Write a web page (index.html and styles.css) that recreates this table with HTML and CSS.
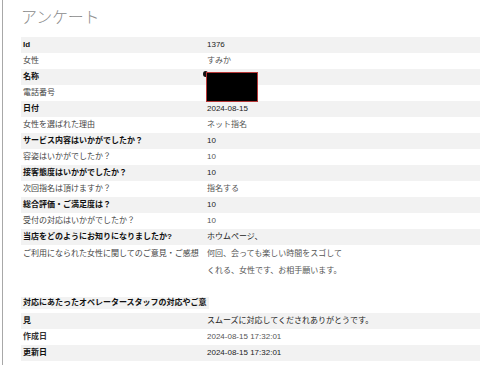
FILE: index.html
```html
<!DOCTYPE html>
<html lang="ja">
<head>
<meta charset="utf-8">
<title>アンケート</title>
<link rel="stylesheet" href="styles.css">
</head>
<body>
<div class="frame">
  <h1 class="title">アンケート</h1>
  <div class="sheet">
    <div class="row alt"><div class="k">Id</div><div class="v">1376</div></div>
    <div class="row"><div class="k">女性</div><div class="v">すみか</div></div>
    <div class="row alt"><div class="k">名称</div><div class="v"></div></div>
    <div class="row"><div class="k">電話番号</div><div class="v"></div></div>
    <div class="row alt"><div class="k">日付</div><div class="v">2024-08-15</div></div>
    <div class="row"><div class="k">女性を選ばれた理由</div><div class="v">ネット指名</div></div>
    <div class="row alt"><div class="k">サービス内容はいかがでしたか？</div><div class="v">10</div></div>
    <div class="row"><div class="k">容姿はいかがでしたか？</div><div class="v">10</div></div>
    <div class="row alt"><div class="k">接客態度はいかがでしたか？</div><div class="v">10</div></div>
    <div class="row"><div class="k">次回指名は頂けますか？</div><div class="v">指名する</div></div>
    <div class="row alt"><div class="k">総合評価・ご満足度は？</div><div class="v">10</div></div>
    <div class="row"><div class="k">受付の対応はいかがでしたか？</div><div class="v">10</div></div>
    <div class="row alt"><div class="k">当店をどのようにお知りになりましたか?</div><div class="v">ホウムページ、</div></div>
    <div class="row tall"><div class="k">ご利用になられた女性に関してのご意見・ご感想</div><div class="v">何回、会っても楽しい時間をスゴして<br>くれる、女性です、お相手願います。</div></div>
    <div class="head">対応にあたったオペレータースタッフの対応やご意</div>
    <div class="row alt"><div class="k">見</div><div class="v">スムーズに対応してくだされありがとうです。</div></div>
    <div class="row"><div class="k bold">作成日</div><div class="v">2024-08-15 17:32:01</div></div>
    <div class="row alt"><div class="k">更新日</div><div class="v">2024-08-15 17:32:01</div></div>
    <span class="dot"></span>
    <span class="redact"></span>
  </div>
</div>
</body>
</html>
```
FILE: styles.css
```css
html, body {
  margin: 0;
  padding: 0;
  background: #fff;
}
body {
  font-family: "Liberation Sans", Arial, "Noto Sans CJK JP", sans-serif;
  color: #444;
}
.frame {
  margin-left: 2px;
  border-left: 1px solid #a8a8a8;
  padding-left: 18px;
  padding-bottom: 4px;
}
.title {
  margin: 0;
  padding-top: 5px;
  height: 22px;
  margin-bottom: 10px;
  font-size: 16px;
  line-height: 22px;
  font-weight: 300;
  color: #8a8a8a;
  font-family: "Noto Sans CJK JP", sans-serif;
  letter-spacing: -0.2px;
}
.sheet {
  position: relative;
  font-size: 8px;
}
.row {
  display: grid;
  grid-template-columns: 184px 1fr;
  height: 16px;
  line-height: 16px;
}
.row .k {
  padding-left: 2px;
  white-space: nowrap;
  color: #444;
}
.row .v {
  padding-left: 2px;
  color: #555;
}
.row.alt {
  background: #f2f2f2;
}
.row.alt .k {
  font-weight: bold;
  color: #111;
}
.row.alt .v {
  color: #222;
}
.row .k.bold {
  font-weight: bold;
  color: #333;
}
.row.tall {
  height: 34px;
  line-height: 17px;
}
.head {
  margin-top: 18px;
  margin-bottom: 4px;
  width: 186px;
  height: 12px;
  line-height: 12px;
  padding-left: 2px;
  background: #f2f2f2;
  font-weight: bold;
  color: #111;
  white-space: nowrap;
}
.redact {
  position: absolute;
  left: 185px;
  top: 35px;
  width: 50px;
  height: 28px;
  background: #000;
  border: 1px solid #b83838;
}
.dot {
  position: absolute;
  left: 182px;
  top: 34px;
  width: 5px;
  height: 6px;
  border-radius: 50%;
  background: #111;
}
```
